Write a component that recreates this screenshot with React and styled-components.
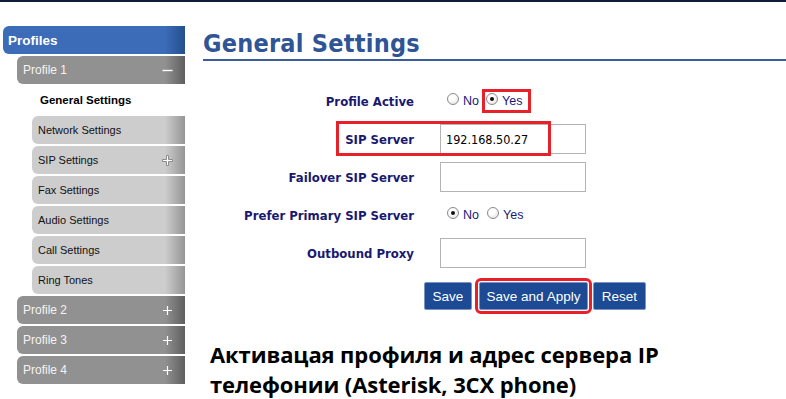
import React from 'react'
import styled, { createGlobalStyle, css } from 'styled-components'

const GlobalStyle = createGlobalStyle`
  html, body {
    margin: 0;
    padding: 0;
    background: #ffffff;
  }
  body {
    font-family: "Liberation Sans", Arial, sans-serif;
  }
`

const Page = styled.div`
  width: 786px;
  height: 399px;
  overflow: hidden;
  border-top: 2px solid #0f1d3a;
  box-sizing: border-box;
  display: flex;
`

const Sidebar = styled.nav`
  width: 185px;
  flex-shrink: 0;
  margin-top: 24px;
  display: flex;
  flex-direction: column;
  gap: 2px;
`

const edge = (base, dark) => css`
  background: linear-gradient(to right, ${base} 0, ${base} calc(100% - 20px), ${dark} 100%);
`

const NavItem = styled.div`
  height: 28px;
  box-sizing: border-box;
  display: flex;
  align-items: center;
  justify-content: space-between;
  border-radius: 6px 0 0 6px;
  ${({ $level }) => $level === 0 && css`
    margin-left: 3px;
    padding-left: 5px;
    ${edge('#3c6bb8', '#24508f')}
    color: #ffffff;
    font-weight: bold;
    font-size: 13.5px;
  `}
  ${({ $level }) => $level === 1 && css`
    margin-left: 17px;
    padding: 0 12px 0 6px;
    ${edge('#919191', '#5f5f5f')}
    color: #f4f4f4;
    font-size: 12px;
  `}
  ${({ $level, $active }) => $level === 2 && css`
    margin-left: 32px;
    padding: 0 12px 0 6px;
    ${$active ? css`
      background: none;
      padding-left: 8px;
      font-weight: bold;
      font-size: 11.5px;
      color: #000000;
    ` : css`
      ${edge('#cdcdcd', '#959595')}
      font-size: 11px;
      color: #111111;
    `}
  `}
`

const Sign = ({ minus, outlined }) => (
  <svg width="11" height="11" viewBox="0 0 11 11">
    {minus ? (
      <rect x="0.5" y="4.8" width="10" height="1.4" fill="#ffffff" />
    ) : outlined ? (
      <path
        d="M4.5 0.5 H6.5 V4.5 H10.5 V6.5 H6.5 V10.5 H4.5 V6.5 H0.5 V4.5 H4.5 Z"
        fill="#ffffff"
        stroke="#8c8c8c"
        strokeWidth="1"
      />
    ) : (
      <path d="M4.9 1 H6.1 V4.9 H10 V6.1 H6.1 V10 H4.9 V6.1 H1 V4.9 H4.9 Z" fill="#ffffff" />
    )}
  </svg>
)

const Main = styled.main`
  margin-left: 18px;
  flex: 1;
  display: flex;
  flex-direction: column;
`

const Heading = styled.h1`
  margin: 29px 0 0;
  padding-bottom: 2px;
  line-height: 26px;
  border-bottom: 2px solid #3a5d9c;
  font-family: "DejaVu Sans Condensed", "DejaVu Sans", sans-serif;
  font-stretch: condensed;
  font-weight: bold;
  font-size: 25px;
  letter-spacing: 0.25px;
  color: #2f5597;
`

const Form = styled.div`
  margin-top: 25px;
  display: flex;
  flex-direction: column;
  gap: 8px;
`

const Row = styled.div`
  position: relative;
  height: 30px;
  display: flex;
  align-items: center;
  gap: 26px;
`

const Label = styled.label`
  width: 211px;
  text-align: right;
  font-family: "DejaVu Sans Condensed", "DejaVu Sans", sans-serif;
  font-stretch: condensed;
  font-weight: bold;
  font-size: 13px;
  color: #191970;
`

const Field = styled.div`
  width: 146px;
  height: 30px;
  box-sizing: border-box;
  border: 1px solid #b4b4b4;
  padding: 0 5px;
  display: flex;
  align-items: center;
  font-family: "DejaVu Sans Condensed", "DejaVu Sans", sans-serif;
  font-stretch: condensed;
  font-size: 12.5px;
  color: #000000;
`

const Choices = styled.div`
  display: flex;
  align-items: center;
  gap: 4px;
  margin-left: 5px;
`

const Option = styled.span`
  display: inline-flex;
  align-items: center;
  gap: 4px;
  height: 18px;
  padding: 0 2px;
  font-size: 12.5px;
  color: #1a1a7a;
  ${({ $marked }) => $marked && css`
    outline: 3px solid #e8202a;
    outline-offset: 0;
    padding: 0 6px 0 1px;
  `}
`

const Radio = styled.span`
  width: 10px;
  height: 10px;
  border-radius: 50%;
  border: 1px solid #8a8a8a;
  background: radial-gradient(circle at 40% 35%, #ffffff 30%, #dcdcdc 100%);
  position: relative;
  top: -2px;
  ${({ $checked }) => $checked && css`
    &::after {
      content: '';
      position: absolute;
      left: 3px;
      top: 3px;
      width: 4px;
      height: 4px;
      border-radius: 50%;
      background: #111111;
    }
  `}
`

const Mark = styled.span`
  position: absolute;
  left: 133px;
  top: -3px;
  width: 215px;
  height: 35px;
  box-sizing: border-box;
  border: 3px solid #e8202a;
  pointer-events: none;
`

const Buttons = styled.div`
  margin-top: 14px;
  padding-left: 221px;
  display: flex;
  align-items: center;
`

const Button = styled.button`
  height: 28px;
  width: ${({ $w }) => $w}px;
  margin-left: ${({ $gap }) => $gap || 0}px;
  padding: 0;
  border: 1px solid #7d93bd;
  border-radius: 2px;
  background: #1c4a94;
  color: #ffffff;
  font-family: "Liberation Sans", Arial, sans-serif;
  font-size: 13.5px;
  ${({ $marked }) => $marked && css`
    outline: 3px solid #e8202a;
    outline-offset: 1px;
  `}
`

const Caption = styled.p`
  margin: 29px 0 0 7px;
  font-family: "Open Sans", "Noto Sans", sans-serif;
  font-weight: bold;
  font-size: 22px;
  line-height: 30px;
  letter-spacing: -0.1px;
  color: #000000;
`

const subItems = ['Network Settings', 'SIP Settings', 'Fax Settings', 'Audio Settings', 'Call Settings', 'Ring Tones']

const ChoiceGroup = ({ value, marked }) => (
  <Choices>
    <Option>
      <Radio $checked={value === 'no'} />No
    </Option>
    <Option $marked={marked}>
      <Radio $checked={value === 'yes'} />Yes
    </Option>
  </Choices>
)

const App = () => {
  return (
    <Page>
      <GlobalStyle />
      <Sidebar>
        <NavItem $level={0}>Profiles</NavItem>
        <NavItem $level={1}>
          Profile 1
          <Sign minus />
        </NavItem>
        <NavItem $level={2} $active>General Settings</NavItem>
        {subItems.map((s) => (
          <NavItem key={s} $level={2}>
            {s}
            {s === 'SIP Settings' && <Sign outlined />}
          </NavItem>
        ))}
        {['Profile 2', 'Profile 3', 'Profile 4'].map((p) => (
          <NavItem key={p} $level={1}>
            {p}
            <Sign />
          </NavItem>
        ))}
      </Sidebar>
      <Main>
        <Heading>General Settings</Heading>
        <Form>
          <Row>
            <Label>Profile Active</Label>
            <ChoiceGroup value="yes" marked />
          </Row>
          <Row>
            <Label>SIP Server</Label>
            <Field>192.168.50.27</Field>
            <Mark />
          </Row>
          <Row>
            <Label>Failover SIP Server</Label>
            <Field />
          </Row>
          <Row>
            <Label>Prefer Primary SIP Server</Label>
            <ChoiceGroup value="no" />
          </Row>
          <Row>
            <Label>Outbound Proxy</Label>
            <Field />
          </Row>
        </Form>
        <Buttons>
          <Button $w={48}>Save</Button>
          <Button $w={109} $gap={7} $marked>Save and Apply</Button>
          <Button $w={53} $gap={5}>Reset</Button>
        </Buttons>
        <Caption>
          Активацая профиля и адрес сервера IP<br />
          телефонии (Asterisk, 3CX phone)
        </Caption>
      </Main>
    </Page>
  )
}

export default App
